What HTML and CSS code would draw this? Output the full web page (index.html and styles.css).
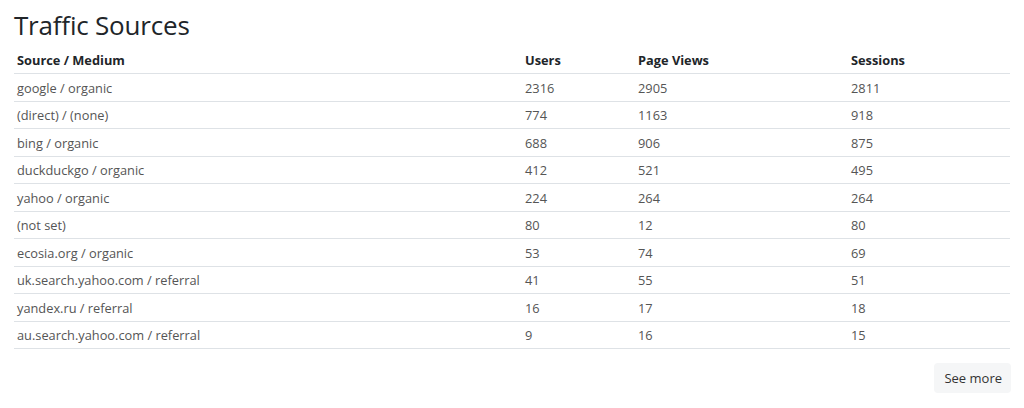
FILE: index.html
```html
<!DOCTYPE html>
<html>
<head>
<meta charset="utf-8">
<link rel="stylesheet" href="styles.css">
</head>
<body>
<div class="page">
  <h1 class="title">Traffic Sources</h1>
  <table class="traffic">
    <colgroup>
      <col class="c-src"><col class="c-users"><col class="c-views"><col class="c-sess">
    </colgroup>
    <thead>
      <tr><th>Source / Medium</th><th>Users</th><th>Page Views</th><th>Sessions</th></tr>
    </thead>
    <tbody>
      <tr><td>google / organic</td><td>2316</td><td>2905</td><td>2811</td></tr>
      <tr><td>(direct) / (none)</td><td>774</td><td>1163</td><td>918</td></tr>
      <tr><td>bing / organic</td><td>688</td><td>906</td><td>875</td></tr>
      <tr><td>duckduckgo / organic</td><td>412</td><td>521</td><td>495</td></tr>
      <tr><td>yahoo / organic</td><td>224</td><td>264</td><td>264</td></tr>
      <tr><td>(not set)</td><td>80</td><td>12</td><td>80</td></tr>
      <tr><td>ecosia.org / organic</td><td>53</td><td>74</td><td>69</td></tr>
      <tr><td>uk.search.yahoo.com / referral</td><td>41</td><td>55</td><td>51</td></tr>
      <tr><td>yandex.ru / referral</td><td>16</td><td>17</td><td>18</td></tr>
      <tr><td>au.search.yahoo.com / referral</td><td>9</td><td>16</td><td>15</td></tr>
    </tbody>
  </table>
  <div class="actions">
    <button class="more">See more</button>
  </div>
</div>
</body>
</html>
```
FILE: styles.css
```css
* { box-sizing: border-box; }
html, body { margin: 0; padding: 0; background: #fff; }
body {
  font-family: "Open Sans", "Noto Sans", sans-serif;
  color: #212529;
}
.page {
  padding: 9px 14px 0 14px;
}
.title {
  margin: 0 0 5px 0;
  font-size: 26px;
  font-weight: 400;
  line-height: 32px;
  color: #212529;
  letter-spacing: -0.2px;
}
.traffic {
  width: 996px;
  border-collapse: collapse;
  font-size: 12.8px;
}
.c-src { width: 508px; }
.c-users { width: 113px; }
.c-views { width: 213px; }
.c-sess { width: 162px; }
.traffic th {
  text-align: left;
  font-weight: 700;
  color: #212529;
  padding: 5px 3px 4px 3px;
  height: 27px;
  border-bottom: 1px solid #dee2e6;
}
.traffic td {
  text-align: left;
  color: #555;
  padding: 4px 3px 3px 3px;
  height: 27.5px;
  border-bottom: 1px solid #dee2e6;
}
.actions {
  display: flex;
  justify-content: flex-end;
  padding-top: 14px;
}
.more {
  font-family: inherit;
  font-size: 13px;
  color: #333;
  background: #f5f6f7;
  border: none;
  border-radius: 4px;
  padding: 0 9px 0 10px;
  height: 30px;
  margin-right: -1px;
}
```
